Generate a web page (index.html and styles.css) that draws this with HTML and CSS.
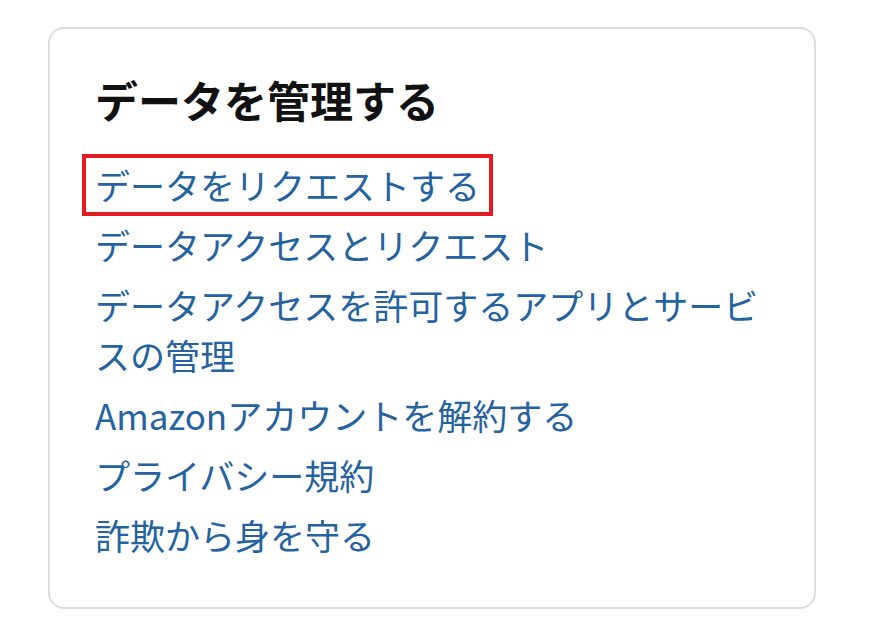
FILE: index.html
```html
<!DOCTYPE html>
<html lang="ja">
<head>
  <meta charset="UTF-8">
  <meta name="viewport" content="width=device-width, initial-scale=1.0">
  <title>データを管理する</title>
  <link rel="stylesheet" href="styles.css">
</head>
<body>
  <div class="card">
    <h2 class="card-title">データを管理する</h2>
    <ul class="link-list">
      <li><a href="#" class="link marked">データをリクエストする</a></li>
      <li><a href="#" class="link">データアクセスとリクエスト</a></li>
      <li><a href="#" class="link">データアクセスを許可するアプリとサービスの管理</a></li>
      <li><a href="#" class="link">Amazonアカウントを解約する</a></li>
      <li><a href="#" class="link">プライバシー規約</a></li>
      <li><a href="#" class="link">詐欺から身を守る</a></li>
    </ul>
  </div>
</body>
</html>
```

FILE: styles.css
```css
body { margin: 0; padding: 27px 0 0 48px; background: #fff; font-family: "Noto Sans CJK JP", "Noto Sans", sans-serif; }
.card { width: 679px; height: 578px; padding: 0 40px 0 45px; border: 2px solid #dddddd; border-radius: 16px; }
.card-title { margin: 40px 0 31px; font-size: 43px; line-height: 60px; font-weight: 700; color: #111; }
.link-list { list-style: none; margin: 0; padding: 0; }
.link-list li { margin-bottom: 10px; font-size: 35px; line-height: 50px; }
.link { color: #2463a0; text-decoration: none; }
.marked { display: inline-block; margin: -6px -13px; padding: 2px 9px; border: 4px solid #e31c23; }
```
